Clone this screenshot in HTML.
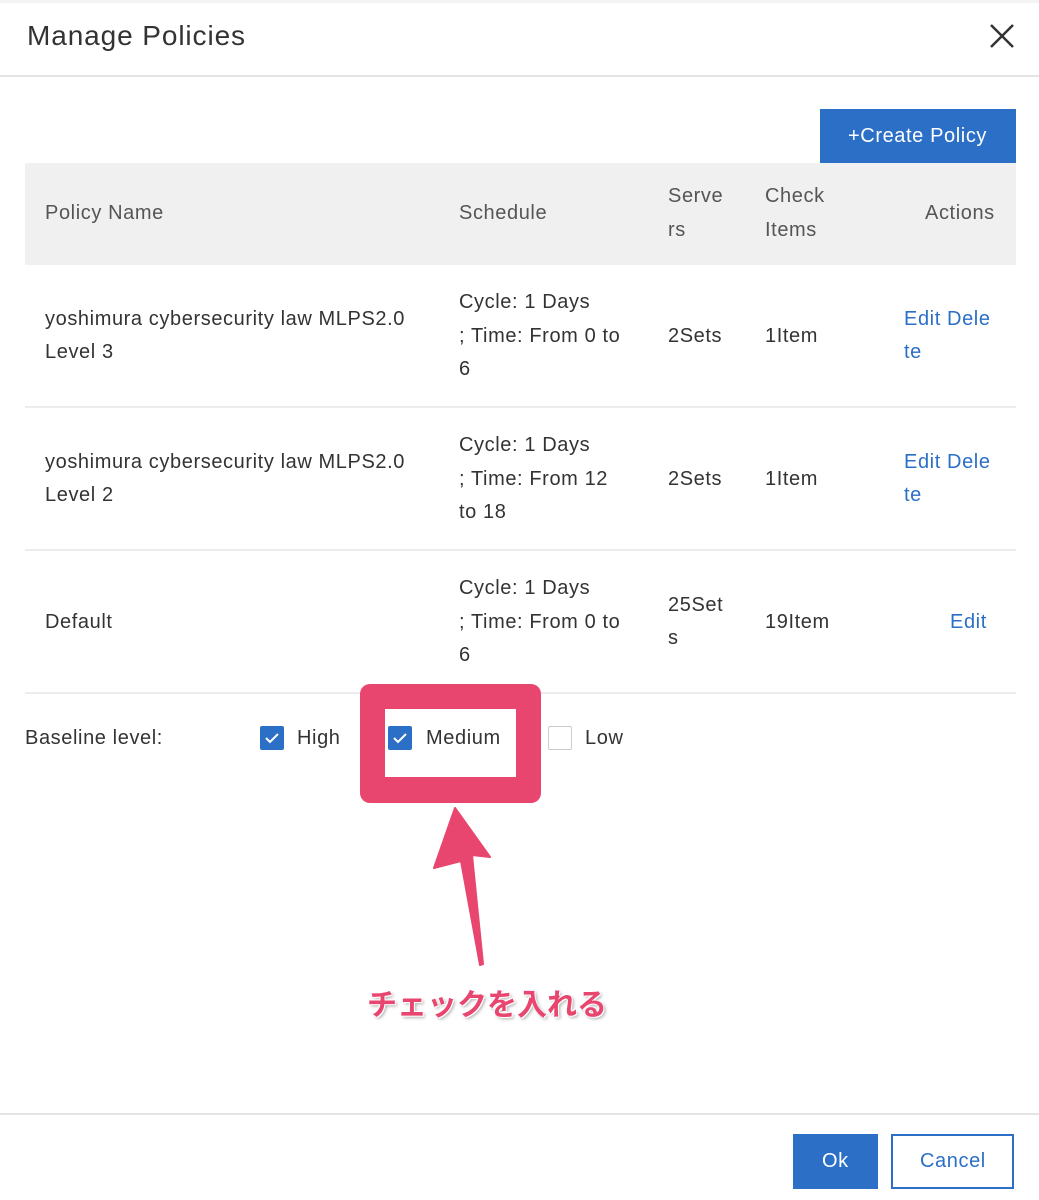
<!DOCTYPE html>
<html><head><meta charset="utf-8"><style>
*{margin:0;padding:0;box-sizing:border-box}
body{width:1039px;height:1200px;background:#fff;position:relative;overflow:hidden;font-family:"Liberation Sans","Noto Sans CJK JP",sans-serif;color:#333;font-size:20px;letter-spacing:0.6px}
.t{position:absolute;line-height:24px;white-space:nowrap}
.b{color:#2b6fc7}
.g{color:#555}
.cb{position:absolute;width:24px;height:24px;background:#2b6fc7;border-radius:2px}
.cb svg{position:absolute;left:0;top:0}
</style></head><body>
<div style="position:absolute;left:0;top:0;width:1039px;height:3px;background:#f3f3f3"></div>
<div class="t" style="left:27px;top:20px;font-size:28px;line-height:32px;color:#333;letter-spacing:0.9px">Manage Policies</div>
<svg style="position:absolute;left:988px;top:22px" width="28" height="28"><path d="M3 3L25 25M25 3L3 25" stroke="#333" stroke-width="2.5"/></svg>
<div style="position:absolute;left:0;top:75px;width:1039px;height:2px;background:#e4e4e4"></div>

<div style="position:absolute;left:820px;top:109px;width:196px;height:54px;background:#2b6fc7"></div>
<div class="t" style="left:848px;top:124px;color:#fff">+Create Policy</div>

<div style="position:absolute;left:25px;top:163px;width:991px;height:102px;background:#f0f0f0"></div>
<div class="t g" style="left:45px;top:201px">Policy Name</div>
<div class="t g" style="left:459px;top:201px">Schedule</div>
<div class="t g" style="left:668px;top:184px">Serve</div>
<div class="t g" style="left:668px;top:218px">rs</div>
<div class="t g" style="left:765px;top:184px">Check</div>
<div class="t g" style="left:765px;top:218px">Items</div>
<div class="t g" style="left:925px;top:201px">Actions</div>

<div class="t" style="left:45px;top:307px">yoshimura cybersecurity law MLPS2.0</div>
<div class="t" style="left:45px;top:340px">Level 3</div>
<div class="t" style="left:459px;top:290px">Cycle: 1 Days</div>
<div class="t" style="left:459px;top:324px">; Time: From 0 to</div>
<div class="t" style="left:459px;top:357px">6</div>
<div class="t" style="left:668px;top:324px">2Sets</div>
<div class="t" style="left:765px;top:324px">1Item</div>
<div class="t b" style="left:904px;top:307px">Edit&nbsp;Dele</div>
<div class="t b" style="left:904px;top:340px">te</div>
<div style="position:absolute;left:25px;top:406px;width:991px;height:2px;background:#ececec"></div>

<div class="t" style="left:45px;top:450px">yoshimura cybersecurity law MLPS2.0</div>
<div class="t" style="left:45px;top:483px">Level 2</div>
<div class="t" style="left:459px;top:433px">Cycle: 1 Days</div>
<div class="t" style="left:459px;top:467px">; Time: From 12</div>
<div class="t" style="left:459px;top:500px">to 18</div>
<div class="t" style="left:668px;top:467px">2Sets</div>
<div class="t" style="left:765px;top:467px">1Item</div>
<div class="t b" style="left:904px;top:450px">Edit&nbsp;Dele</div>
<div class="t b" style="left:904px;top:483px">te</div>
<div style="position:absolute;left:25px;top:549px;width:991px;height:2px;background:#ececec"></div>

<div class="t" style="left:45px;top:610px">Default</div>
<div class="t" style="left:459px;top:576px">Cycle: 1 Days</div>
<div class="t" style="left:459px;top:610px">; Time: From 0 to</div>
<div class="t" style="left:459px;top:643px">6</div>
<div class="t" style="left:668px;top:593px">25Set</div>
<div class="t" style="left:668px;top:626px">s</div>
<div class="t" style="left:765px;top:610px">19Item</div>
<div class="t b" style="left:950px;top:610px">Edit</div>
<div style="position:absolute;left:25px;top:692px;width:991px;height:2px;background:#ececec"></div>

<div style="position:absolute;left:360px;top:684px;width:181px;height:119px;background:#e8466f;border-radius:10px"></div>
<div style="position:absolute;left:385px;top:709px;width:131px;height:68px;background:#fff"></div>

<div class="t" style="left:25px;top:726px">Baseline level:</div>
<div class="cb" style="left:260px;top:726px"><svg width="24" height="24"><path d="M6 12l4 4 8-8" stroke="#fff" stroke-width="2" fill="none"/></svg></div>
<div class="t" style="left:297px;top:726px">High</div>
<div class="cb" style="left:388px;top:726px"><svg width="24" height="24"><path d="M6 12l4 4 8-8" stroke="#fff" stroke-width="2" fill="none"/></svg></div>
<div class="t" style="left:426px;top:726px">Medium</div>
<div style="position:absolute;left:548px;top:726px;width:24px;height:24px;border:1px solid #ccc;border-radius:2px"></div>
<div class="t" style="left:585px;top:726px">Low</div>

<svg style="position:absolute;left:0;top:0" width="1039" height="1200"><path d="M455 808L490 857 472 855 483 964 480 965 461 861 434 868Z" fill="#e8466f" stroke="#e8466f" stroke-width="2" stroke-linejoin="round"/></svg>
<div class="t" style="left:367px;top:988px;font-size:30px;line-height:36px;font-weight:bold;color:#e8466f;letter-spacing:0;text-shadow:0 0 2px #fff,1px 1px 0 #fff,-1px -1px 0 #fff,2px 2px 3px rgba(0,0,0,.35)">チェックを入れる</div>

<div style="position:absolute;left:0;top:1113px;width:1039px;height:2px;background:#e4e4e4"></div>
<div style="position:absolute;left:793px;top:1134px;width:85px;height:55px;background:#2b6fc7"></div>
<div class="t" style="left:822px;top:1149px;color:#fff">Ok</div>
<div style="position:absolute;left:891px;top:1134px;width:123px;height:55px;border:2px solid #2b6fc7"></div>
<div class="t b" style="left:920px;top:1149px">Cancel</div>
</body></html>
